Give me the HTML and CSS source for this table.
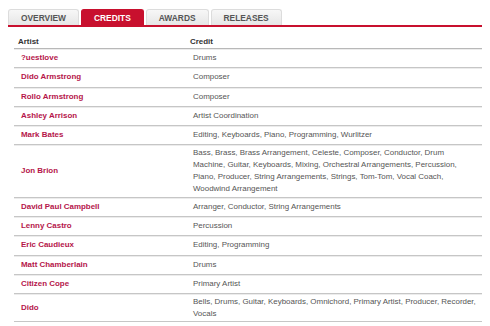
FILE: index.html
```html
<!DOCTYPE html>
<html>
<head>
<meta charset="utf-8">
<link rel="stylesheet" href="styles.css">
</head>
<body>
<div class="page">
  <nav class="tabs">
    <a class="tab">OVERVIEW</a>
    <a class="tab active">CREDITS</a>
    <a class="tab">AWARDS</a>
    <a class="tab">RELEASES</a>
  </nav>
  <div class="credits">
    <div class="row head"><div class="c1">Artist</div><div class="c2">Credit</div></div>
    <div class="row"><div class="artist">?uestlove</div><div class="credit">Drums</div></div>
    <div class="row"><div class="artist">Dido Armstrong</div><div class="credit">Composer</div></div>
    <div class="row"><div class="artist">Rollo Armstrong</div><div class="credit">Composer</div></div>
    <div class="row"><div class="artist">Ashley Arrison</div><div class="credit">Artist Coordination</div></div>
    <div class="row"><div class="artist">Mark Bates</div><div class="credit">Editing, Keyboards, Piano, Programming, Wurlitzer</div></div>
    <div class="row"><div class="artist">Jon Brion</div><div class="credit">Bass, Brass, Brass Arrangement, Celeste, Composer, Conductor, Drum Machine, Guitar, Keyboards, Mixing, Orchestral Arrangements, Percussion, Piano, Producer, String Arrangements, Strings, Tom-Tom, Vocal Coach, Woodwind Arrangement</div></div>
    <div class="row"><div class="artist">David Paul Campbell</div><div class="credit">Arranger, Conductor, String Arrangements</div></div>
    <div class="row"><div class="artist">Lenny Castro</div><div class="credit">Percussion</div></div>
    <div class="row"><div class="artist">Eric Caudieux</div><div class="credit">Editing, Programming</div></div>
    <div class="row"><div class="artist">Matt Chamberlain</div><div class="credit">Drums</div></div>
    <div class="row"><div class="artist">Citizen Cope</div><div class="credit">Primary Artist</div></div>
    <div class="row"><div class="artist">Dido</div><div class="credit">Bells, Drums, Guitar, Keyboards, Omnichord, Primary Artist, Producer, Recorder, Vocals</div></div>
  </div>
</div>
</body>
</html>
```
FILE: styles.css
```css
html, body {
  margin: 0;
  padding: 0;
  background: #ffffff;
}
body {
  font-family: "Liberation Sans", Arial, sans-serif;
  color: #555555;
}
.page {
  margin: 9px 0 0 8px;
  width: 474px;
}
.tabs {
  display: flex;
  gap: 2px;
  border-bottom: 2px solid #c8102e;
  height: 16px;
  align-items: flex-end;
}
.tab {
  display: block;
  height: 15px;
  line-height: 16px;
  padding: 0 12px;
  font-size: 8.4px;
  font-weight: bold;
  color: #555555;
  background: linear-gradient(#f7f7f7, #e6e6e6);
  border: 1px solid #dcdcdc;
  border-bottom: none;
  border-radius: 3px 3px 0 0;
}
.tab.active {
  background: #c8102e;
  border-color: #c8102e;
  color: #ffffff;
}
.credits {
  margin: 8px 0 0 6px;
  width: 468px;
  font-size: 7.95px;
  line-height: 12.2px;
}
.row {
  display: grid;
  grid-template-columns: 176px 1fr;
  align-items: center;
  border-bottom: 1px solid #c6c6c6;
  box-shadow: 0 1px 0 #ececec;
}
.head {
  color: #333333;
  font-weight: bold;
  border-bottom-color: #b8b8b8;
}
.head .c1 { padding: 1px 4px 0; }
.head .c2 { padding: 1px 0 0; }
.artist {
  padding: 3px 7px;
  font-weight: bold;
  color: #b5154a;
}
.credit {
  padding: 1.5px 5px 1.5px 3px;
}
```
